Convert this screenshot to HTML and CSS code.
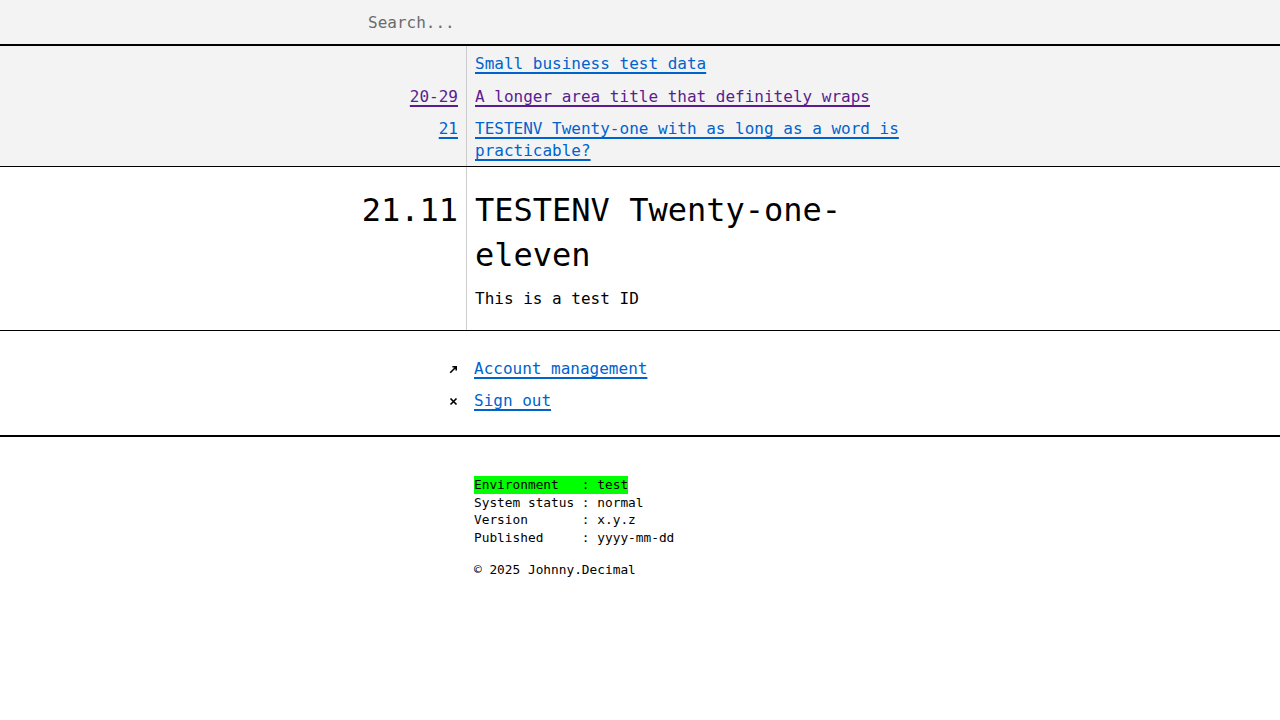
FILE: index.html
```html
<!DOCTYPE html>
<html lang="en">
<head>
<meta charset="utf-8">
<title>21.11 TESTENV Twenty-one-eleven</title>
<link rel="stylesheet" href="styles.css">
</head>
<body>
<header class="search-bar">
  <div class="wrap">
    <input class="search-input" type="text" placeholder="Search...">
  </div>
</header>

<nav class="crumbs">
  <ul class="wrap crumb-list">
    <li class="crumb">
      <span class="crumb-id"></span>
      <span class="crumb-title"><a class="link" href="#">Small business test data</a></span>
    </li>
    <li class="crumb">
      <span class="crumb-id"><a class="link visited" href="#">20-29</a></span>
      <span class="crumb-title"><a class="link visited" href="#">A longer area title that definitely wraps</a></span>
    </li>
    <li class="crumb">
      <span class="crumb-id"><a class="link" href="#">21</a></span>
      <span class="crumb-title"><a class="link" href="#">TESTENV Twenty-one with as long as a word is practicable?</a></span>
    </li>
  </ul>
</nav>

<main class="entry">
  <div class="wrap entry-grid">
    <div class="entry-id">21.11</div>
    <div class="entry-body">
      <h1 class="entry-title">TESTENV Twenty-one-eleven</h1>
      <p class="entry-desc">This is a test ID</p>
    </div>
  </div>
</main>

<section class="account">
  <ul class="wrap action-list">
    <li class="action">
      <span class="action-icon">
        <svg width="9" height="9" viewBox="0 0 9 9" aria-hidden="true"><path d="M1.2 7.8 L7.2 1.8 M3.4 1.8 H7.2 V5.6" fill="none" stroke="#000" stroke-width="1.6"/></svg>
      </span>
      <a class="link" href="#">Account management</a>
    </li>
    <li class="action">
      <span class="action-icon">
        <svg width="9" height="9" viewBox="0 0 9 9" aria-hidden="true"><path d="M1.5 1.5 L7.5 7.5 M7.5 1.5 L1.5 7.5" fill="none" stroke="#000" stroke-width="1.7"/></svg>
      </span>
      <a class="link" href="#">Sign out</a>
    </li>
  </ul>
</section>

<footer class="site-footer">
  <div class="wrap footer-inner">
<pre class="status"><span class="env">Environment   : test</span>
System status : normal
Version       : x.y.z
Published     : yyyy-mm-dd</pre>
    <p class="copyright">© 2025 Johnny.Decimal</p>
  </div>
</footer>
</body>
</html>
```

FILE: styles.css
```css
* {
  box-sizing: border-box;
}

html, body {
  margin: 0;
  padding: 0;
  background: #fff;
  color: #000;
  font-family: "DejaVu Sans Mono", "Liberation Mono", monospace;
  font-size: 16px;
  line-height: 22px;
}

.wrap {
  width: 560px;
  margin: 0 auto;
}

ul {
  list-style: none;
  margin: 0;
  padding: 0;
}

.link {
  color: #0063cc;
  text-decoration: underline;
  text-decoration-thickness: 2px;
  text-underline-offset: 3px;
}

.link.visited {
  color: #5a1d8f;
}

/* Search */
.search-bar {
  background: #f3f3f3;
  border-bottom: 2px solid #000;
}

.search-input {
  display: block;
  width: 100%;
  height: 44px;
  padding: 0 8px;
  border: 0;
  outline: none;
  background: transparent;
  font-family: inherit;
  font-size: 16px;
  color: #000;
}

.search-input::placeholder {
  color: #6b6b6b;
}

/* Breadcrumbs */
.crumbs {
  background: #f3f3f3;
  border-bottom: 1px solid #000;
}

.crumb {
  display: grid;
  grid-template-columns: 107px 1fr;
}

.crumb-id {
  text-align: right;
  padding: 6px 8px 4px 0;
  border-right: 1px solid #cccccc;
}

.crumb-title {
  padding: 6px 8px 4px;
}

.crumb:first-child .crumb-id,
.crumb:first-child .crumb-title {
  padding-top: 7px;
  padding-bottom: 5px;
}

/* Entry */
.entry {
  border-bottom: 1px solid #000;
}

.entry-grid {
  display: grid;
  grid-template-columns: 107px 1fr;
}

.entry-id {
  text-align: right;
  font-size: 32px;
  line-height: 45px;
  padding: 21px 8px 20px 0;
  border-right: 1px solid #cccccc;
}

.entry-body {
  padding: 21px 8px 20px;
}

.entry-title {
  margin: 0 0 10px;
  font-size: 32px;
  line-height: 45px;
  font-weight: normal;
}

.entry-desc {
  margin: 0;
}

/* Account actions */
.account {
  border-bottom: 2px solid #000;
}

.action-list {
  padding: 22px 0 18px;
}

.action {
  display: grid;
  grid-template-columns: 106px 1fr;
  padding: 5px 0;
}

.action-icon {
  display: flex;
  justify-content: flex-end;
  align-items: center;
  padding-right: 8px;
}

.action-icon svg {
  display: block;
}

.action .link {
  padding-left: 8px;
  justify-self: start;
}

/* Footer */
.footer-inner {
  padding: 39px 0 40px 114px;
}

.status {
  margin: 0;
  font-family: inherit;
  font-size: 12.8px;
  line-height: 17.7px;
}

.env {
  display: inline-block;
  background: #00ff00;
  line-height: 17.7px;
}

.copyright {
  margin: 14px 0 0;
  font-size: 12.8px;
  line-height: 17.7px;
}
```
